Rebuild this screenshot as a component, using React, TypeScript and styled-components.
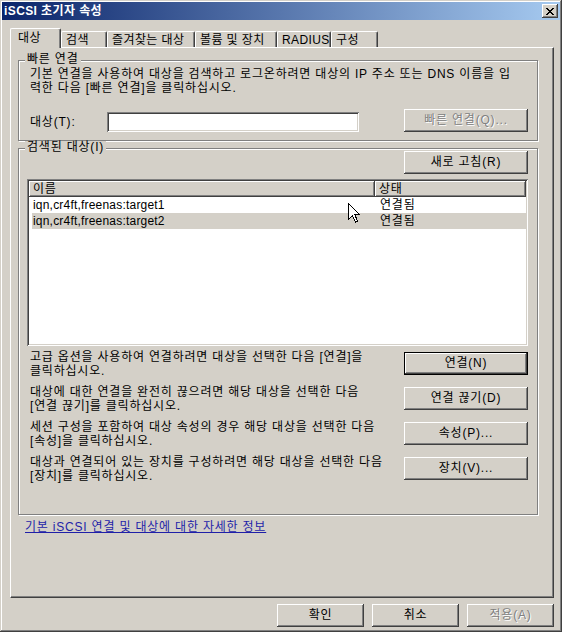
import React from 'react';
import styled, { createGlobalStyle, css } from 'styled-components';

const targets = [
  { name: 'iqn,cr4ft,freenas:target1', status: '연결됨', selected: false },
  { name: 'iqn,cr4ft,freenas:target2', status: '연결됨', selected: true },
];

const tabs = [
  { label: '대상', w: 51, active: true },
  { label: '검색', w: 46 },
  { label: '즐겨찾는 대상', w: 88 },
  { label: '볼륨 및 장치', w: 82 },
  { label: 'RADIUS', w: 54 },
  { label: '구성', w: 47 },
];

const actions = [
  { lines: ['고급 옵션을 사용하여 연결하려면 대상을 선택한 다음 [연결]을', '클릭하십시오.'], button: '연결(N)', isDefault: true },
  { lines: ['대상에 대한 연결을 완전히 끊으려면 해당 대상을 선택한 다음', '[연결 끊기]를 클릭하십시오.'], button: '연결 끊기(D)' },
  { lines: ['세션 구성을 포함하여 대상 속성의 경우 해당 대상을 선택한 다음', '[속성]을 클릭하십시오.'], button: '속성(P)...' },
  { lines: ['대상과 연결되어 있는 장치를 구성하려면 해당 대상을 선택한 다음', '[장치]를 클릭하십시오.'], button: '장치(V)...' },
];

// pixels of the classic close glyph
const closePixels = [
  [0, 0], [1, 0], [6, 0], [7, 0],
  [1, 1], [2, 1], [5, 1], [6, 1],
  [2, 2], [3, 2], [4, 2], [5, 2],
  [3, 3], [4, 3],
  [2, 4], [3, 4], [4, 4], [5, 4],
  [1, 5], [2, 5], [5, 5], [6, 5],
  [0, 6], [1, 6], [6, 6], [7, 6],
];

const App = () => {
  return (
    <>
      <GlobalStyle />
      <Window>
        <TitleBar>
          <TitleText>iSCSI 초기자 속성</TitleText>
          <CloseButton aria-label="닫기">
            <svg width="8" height="7" viewBox="0 0 8 7" shapeRendering="crispEdges">
              {closePixels.map(([x, y]) => (
                <rect key={`${x}-${y}`} x={x} y={y} width="1" height="1" fill="#000" />
              ))}
            </svg>
          </CloseButton>
        </TitleBar>

        <Body>
          <TabStrip>
            {tabs.map((t) => (
              <Tab key={t.label} $w={t.w} $active={t.active}>{t.label}</Tab>
            ))}
          </TabStrip>

          <Panel>
            <Group>
              <GroupTitle>빠른 연결</GroupTitle>
              <QuickBody>
                <Desc>
                  기본 연결을 사용하여 대상을 검색하고 로그온하려면 대상의 IP 주소 또는 DNS 이름을 입
                  <br />
                  력한 다음 [빠른 연결]을 클릭하십시오.
                </Desc>
                <ConnectRow>
                  <FieldLabel>대상(T):</FieldLabel>
                  <TextInput type="text" />
                  <Spacer />
                  <Button disabled>빠른 연결(Q)...</Button>
                </ConnectRow>
              </QuickBody>
            </Group>

            <Group $gap={7}>
              <GroupTitle>검색된 대상(I)</GroupTitle>
              <FoundBody>
                <ButtonRow>
                  <Button>새로 고침(R)</Button>
                </ButtonRow>

                <ListView>
                  <HeaderRow>
                    <HeaderCell $w={346}>이름</HeaderCell>
                    <HeaderCell>상태</HeaderCell>
                  </HeaderRow>
                  {targets.map((t) => (
                    <ListRow key={t.name} $selected={t.selected}>
                      <NameCell>{t.name}</NameCell>
                      <StatusCell>{t.status}</StatusCell>
                    </ListRow>
                  ))}
                  <Cursor width="12" height="20" viewBox="0 0 12 20">
                    <path
                      d="M0.5 0.5 L0.5 16.5 L4.5 12.5 L7.5 19 L9.5 18 L6.8 11.5 L11.5 11.5 Z"
                      fill="#fff"
                      stroke="#000"
                      strokeWidth="1"
                      shapeRendering="crispEdges"
                    />
                  </Cursor>
                </ListView>

                <Actions>
                  {actions.map((a) => (
                    <ActionRow key={a.button}>
                      <ActionText>
                        {a.lines[0]}
                        <br />
                        {a.lines[1]}
                      </ActionText>
                      <Button $default={a.isDefault}>{a.button}</Button>
                    </ActionRow>
                  ))}
                </Actions>
              </FoundBody>
            </Group>

            <HelpLink href="#">기본 iSCSI 연결 및 대상에 대한 자세한 정보</HelpLink>
          </Panel>

          <Footer>
            <Button $w={87}>확인</Button>
            <Button $w={87}>취소</Button>
            <Button $w={87} disabled>적용(A)</Button>
          </Footer>
        </Body>
      </Window>
    </>
  );
};

export default App;

// Styled Components
const GlobalStyle = createGlobalStyle`
  html, body {
    margin: 0;
    padding: 0;
    background: #d4d0c8;
  }
  body {
    font-family: "Liberation Sans", "Noto Sans CJK KR", sans-serif;
    font-size: 12px;
    letter-spacing: 0.8px;
    color: #000;
  }
  * {
    box-sizing: border-box;
  }
`;

const raised = css`
  box-shadow:
    inset -1px -1px #404040,
    inset 1px 1px #fff,
    inset -2px -2px #808080,
    inset 2px 2px #d4d0c8;
`;

const sunken = css`
  box-shadow:
    inset 1px 1px #808080,
    inset -1px -1px #fff,
    inset 2px 2px #404040,
    inset -2px -2px #d4d0c8;
`;

const Window = styled.div`
  width: 562px;
  height: 632px;
  padding: 2px;
  display: flex;
  flex-direction: column;
  background: #d4d0c8;
  box-shadow:
    inset -1px -1px #404040,
    inset 1px 1px #d4d0c8,
    inset -2px -2px #808080,
    inset 2px 2px #fff;
`;

const TitleBar = styled.div`
  height: 18px;
  padding: 0 2px;
  display: flex;
  align-items: center;
  justify-content: space-between;
  background: linear-gradient(to right, #0a246a, #a6caf0);
`;

const TitleText = styled.span`
  color: #fff;
  font-weight: bold;
  font-size: 12px;
  line-height: 14px;
  letter-spacing: 0.4px;
`;

const CloseButton = styled.button`
  width: 16px;
  height: 14px;
  padding: 0;
  border: 0;
  display: flex;
  align-items: center;
  justify-content: center;
  background: #d4d0c8;
  ${raised}
`;

const Body = styled.div`
  flex: 1;
  padding: 8px 6px 0 8px;
  display: flex;
  flex-direction: column;
`;

const TabStrip = styled.div`
  height: 19px;
  display: flex;
  align-items: flex-end;
`;

const Tab = styled.div<{ $w: number; $active?: boolean }>`
  position: relative;
  z-index: ${(p) => (p.$active ? 1 : 0)};
  width: ${(p) => p.$w}px;
  height: ${(p) => (p.$active ? 20 : 16)}px;
  margin-bottom: ${(p) => (p.$active ? -1 : 0)}px;
  padding: ${(p) => (p.$active ? '3px 0 0 7px' : '2px 0 0 4px')};
  background: #d4d0c8;
  border-top: 1px solid #fff;
  border-left: 1px solid #fff;
  border-right: 1px solid #404040;
  border-radius: 2px 2px 0 0;
  box-shadow: inset -1px 0 #808080;
  line-height: 13px;
  letter-spacing: 0.4px;
  white-space: nowrap;
  overflow: hidden;
`;

const Panel = styled.div`
  height: 551px;
  padding: 12px 15px 0 7px;
  display: flex;
  flex-direction: column;
  border: 1px solid;
  border-color: #fff #404040 #404040 #fff;
  box-shadow: inset -1px -1px #808080;
`;

const Group = styled.div<{ $gap?: number }>`
  position: relative;
  margin-top: ${(p) => p.$gap ?? 0}px;
  border: 1px solid #808080;
  box-shadow: inset 1px 1px #fff, 1px 1px #fff;
`;

const GroupTitle = styled.span`
  position: absolute;
  top: -8px;
  left: 6px;
  padding: 0 2px;
  background: #d4d0c8;
  line-height: 13px;
  white-space: nowrap;
`;

const QuickBody = styled.div`
  padding: 7px 9px 8px 11px;
`;

const Desc = styled.p`
  margin: 0;
  line-height: 13.5px;
  white-space: nowrap;
`;

const ConnectRow = styled.div`
  margin-top: 14px;
  display: flex;
  align-items: flex-end;
`;

const FieldLabel = styled.label`
  width: 77px;
  line-height: 20px;
`;

const TextInput = styled.input`
  width: 252px;
  height: 20px;
  border: 0;
  outline: none;
  background: #fff;
  ${sunken}
`;

const Spacer = styled.div`
  flex: 1;
`;

const Button = styled.button<{ $default?: boolean; $w?: number }>`
  width: ${(p) => p.$w ?? 124}px;
  height: 23px;
  padding: 0;
  font: inherit;
  letter-spacing: inherit;
  line-height: 13px;
  color: ${(p) => (p.disabled ? '#808080' : '#000')};
  text-shadow: ${(p) => (p.disabled ? '1px 1px #fff' : 'none')};
  background: #d4d0c8;
  border: ${(p) => (p.$default ? '1px solid #000' : '0')};
  white-space: nowrap;
  ${raised}
`;

const FoundBody = styled.div`
  padding: 2px 9px 34px 8px;
`;

const ButtonRow = styled.div`
  display: flex;
  justify-content: flex-end;
`;

const ListView = styled.div`
  position: relative;
  height: 167px;
  margin-top: 5px;
  padding: 2px;
  background: #fff;
  ${sunken}
`;

const HeaderRow = styled.div`
  display: flex;
  height: 16px;
`;

const HeaderCell = styled.div<{ $w?: number }>`
  ${(p) => (p.$w ? `width: ${p.$w}px;` : 'flex: 1;')}
  height: 16px;
  padding-left: 4px;
  line-height: 16px;
  background: #d4d0c8;
  box-shadow:
    inset -1px -1px #404040,
    inset 1px 1px #fff,
    inset -2px -2px #808080;
`;

const ListRow = styled.div<{ $selected?: boolean }>`
  display: flex;
  height: 16px;
  margin-left: 3px;
  line-height: 16px;
  background: ${(p) => (p.$selected ? '#d4d0c8' : 'transparent')};
`;

const NameCell = styled.div`
  width: 343px;
  padding-left: 1px;
  letter-spacing: 0.2px;
`;

const StatusCell = styled.div`
  flex: 1;
  padding-left: 5px;
`;

const Cursor = styled.svg`
  position: absolute;
  left: 321px;
  top: 24px;
`;

const Actions = styled.div`
  margin-top: 6px;
  display: flex;
  flex-direction: column;
  gap: 12px;
`;

const ActionRow = styled.div`
  height: 23px;
  display: flex;
  align-items: flex-start;
  justify-content: space-between;
`;

const ActionText = styled.p`
  margin: -1px 0 0;
  padding-left: 3px;
  line-height: 13.5px;
  white-space: nowrap;
`;

const HelpLink = styled.a`
  align-self: flex-start;
  margin: 6px 0 0 7px;
  line-height: 13px;
  color: #1f1fa8;
  text-decoration: underline;
`;

const Footer = styled.div`
  margin-top: 6px;
  display: flex;
  justify-content: flex-end;
  gap: 8px;
`;
